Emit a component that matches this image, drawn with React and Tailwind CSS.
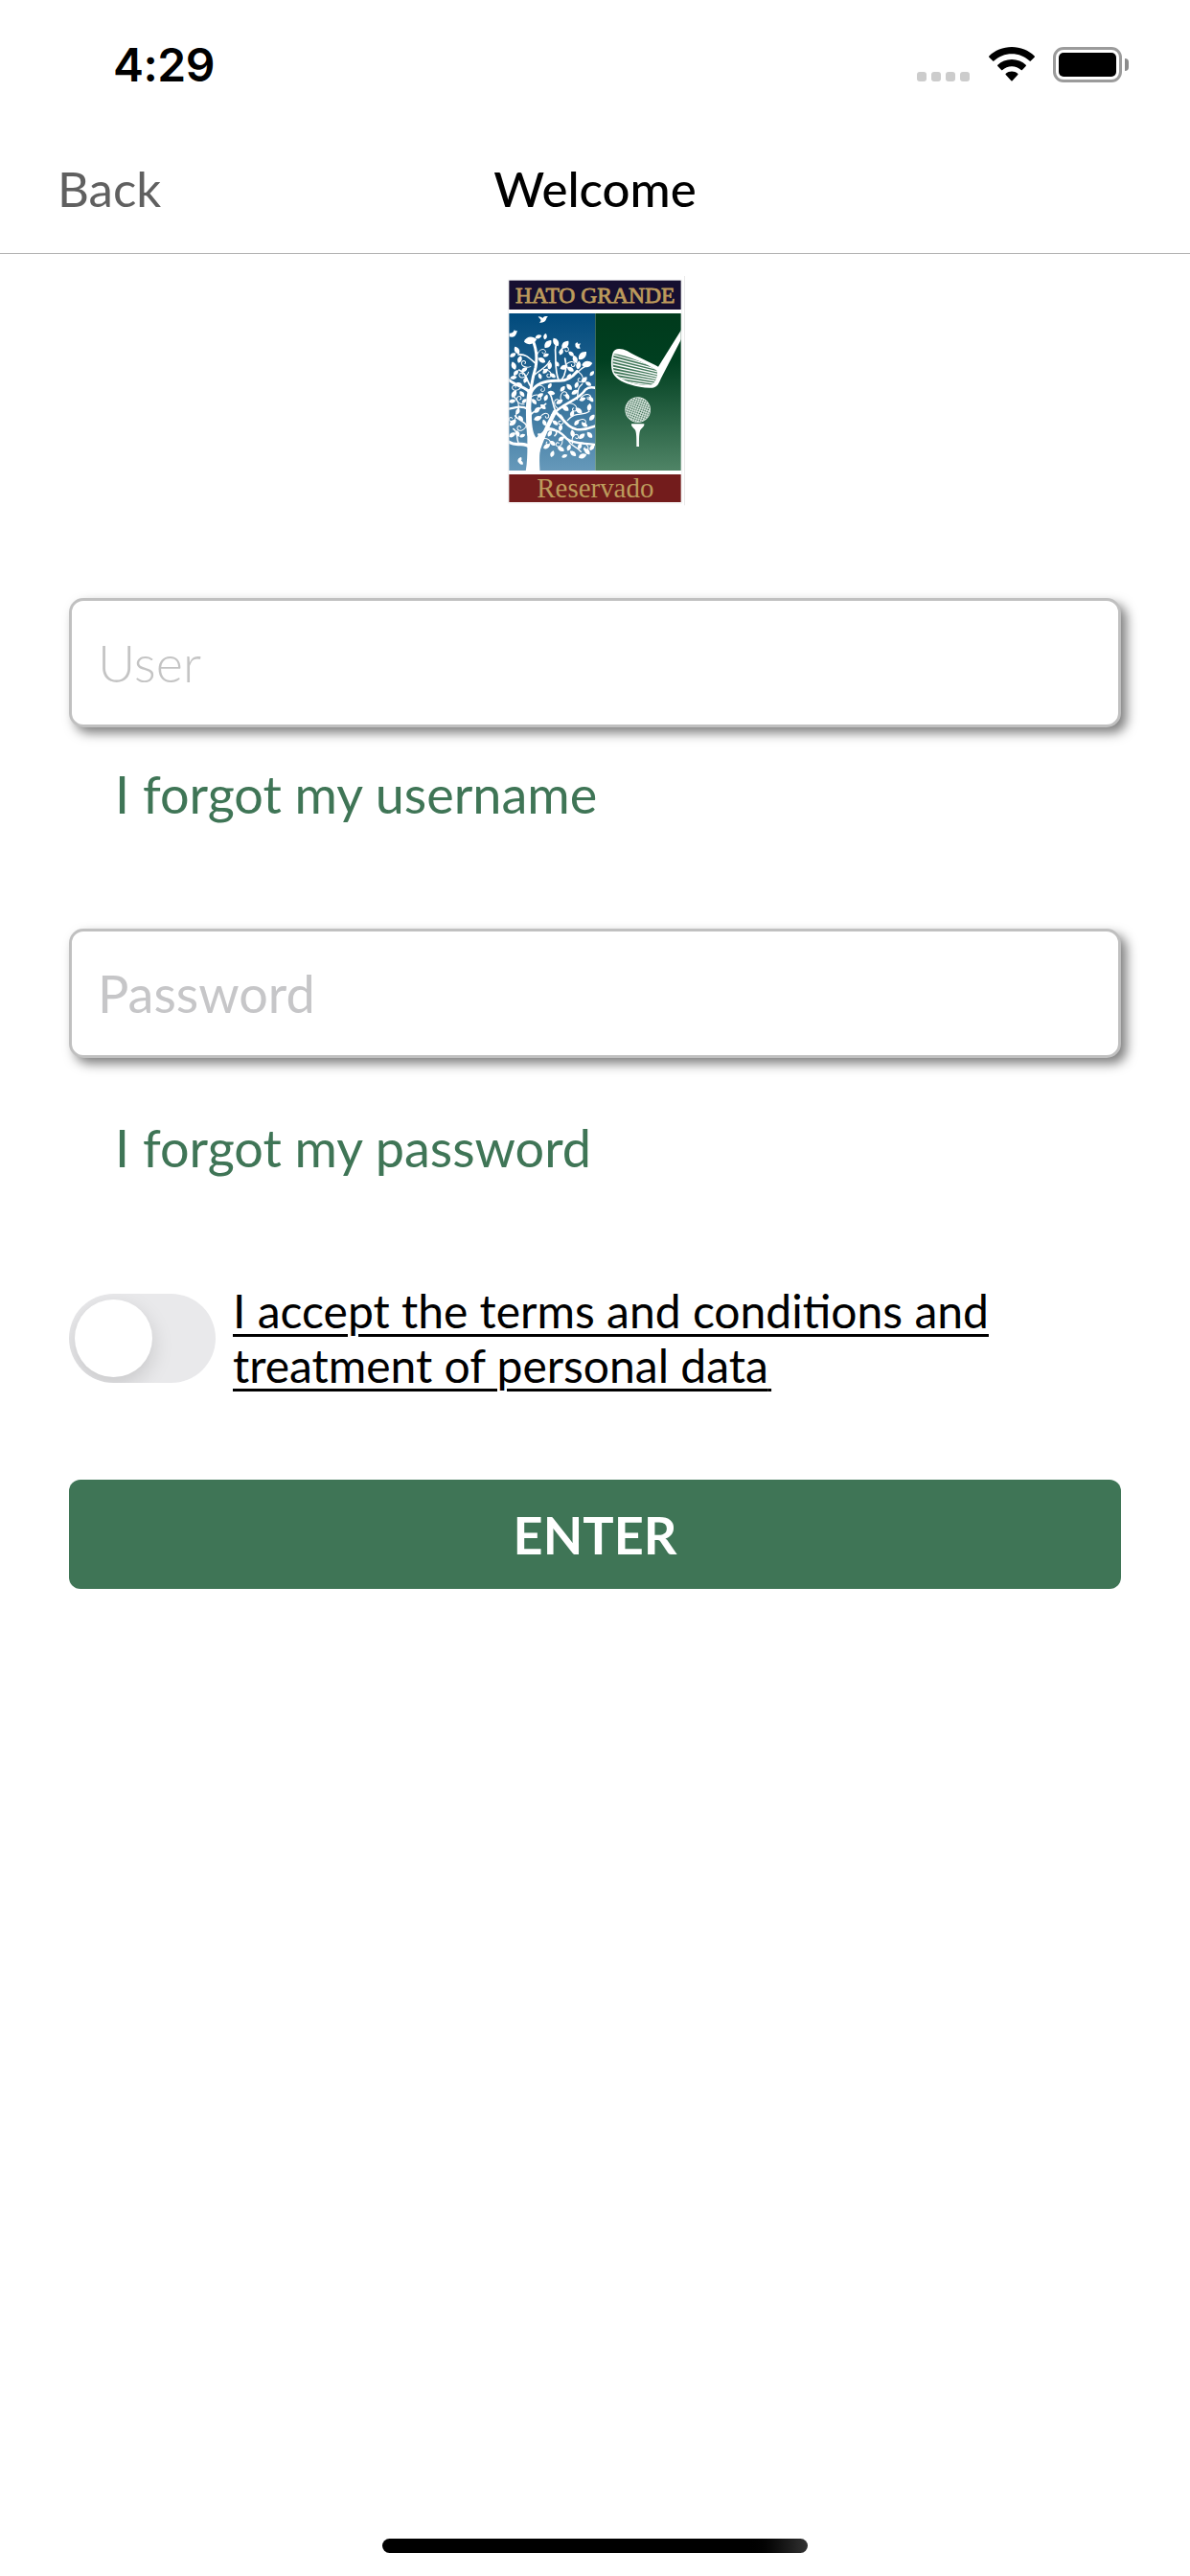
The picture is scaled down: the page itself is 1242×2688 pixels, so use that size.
import { useState } from "react";

// Main limbs of the tree: [path, stroke width]
const BRANCHES = [
  ["M98 640 C104 560 92 500 95 440 C98 390 104 350 116 310 C122 280 118 250 106 222", 9],
  ["M97 520 C92 460 92 420 99 385", 16],
  ["M118 590 C130 540 150 500 176 450", 13],
  ["M98 390 C88 372 60 372 33 350", 9],
  ["M92 440 C70 428 50 436 33 440", 7],
  ["M98 560 C80 540 56 560 33 544", 10],
  ["M104 385 C118 360 150 350 190 352 C215 352 232 340 246 322", 9],
  ["M188 350 C176 320 180 290 178 262 C176 246 184 238 180 224", 5],
  ["M196 352 C212 330 214 304 208 282", 5],
  ["M168 460 C200 420 250 416 272 380 C280 372 292 372 302 374", 8],
  ["M178 446 C168 424 170 404 158 388", 5],
  ["M176 448 C204 470 214 498 244 504 C270 508 286 500 302 494", 8],
  ["M150 506 C186 500 200 520 214 534 C240 552 270 546 300 552", 7],
  ["M152 500 C176 500 190 512 176 524", 5],
  ["M118 300 C98 282 84 266 62 270", 5],
  ["M112 334 C130 316 148 314 160 290", 4],
  ["M102 372 C84 346 90 330 64 318", 5],
  ["M96 464 C112 440 132 444 148 424", 5],
  ["M92 505 C88 478 66 480 52 462", 5],
  ["M216 476 C240 446 262 464 284 448", 4],
  ["M214 532 C226 560 246 556 258 574", 4],
  ["M236 334 C256 320 262 308 276 306", 4],
  ["M246 410 C250 390 244 376 262 362", 4],
  ["M62 440 C68 414 50 410 46 396", 4],
  ["M62 546 C54 524 62 512 46 502", 4],
];

// Curled twigs: [x, y, scale, rotation]
const CURLS = [
  [136, 262, 1, 0], [156, 330, 1, 80], [76, 334, 1, 190], [228, 300, 1, 20],
  [256, 344, 1, 110], [66, 412, 1, 260], [122, 404, 1, 40], [146, 462, 1, 10],
  [204, 396, 1, 330], [236, 436, 1, 80], [262, 480, 1, 20], [196, 478, 1, 120],
  [70, 500, 1, 190], [152, 542, 1, 60], [190, 548, 1, 150], [240, 530, 1, 330],
  [278, 402, 1, 30], [54, 374, 1, 200], [82, 300, 1, 240], [208, 254, 1, 10],
  [44, 470, 1, 160], [272, 560, 1, 80], [136, 376, 0.9, 70], [182, 420, 0.9, 300],
];

// Leaves: [x, y, rotation, scale]
const LEAVES = [
  [98, 226, 80, 1.7], [124, 214, 70, 0.9], [146, 214, 10, 0.8], [154, 238, 40, 1.3], [180, 232, -30, 1.2],
  [208, 240, 40, 1.3], [196, 262, 20, 0.9], [228, 268, -50, 0.9], [262, 274, 45, 1.4], [276, 300, 80, 1.4],
  [240, 286, -20, 1.1], [292, 330, 40, 0.8], [58, 258, -30, 1.1], [44, 272, 60, 0.9], [66, 286, 20, 1],
  [48, 306, -20, 1.1], [80, 318, 60, 0.9], [54, 328, 40, 0.9], [136, 288, -60, 1.1], [148, 272, 70, 0.8],
  [160, 306, 10, 1], [146, 322, 50, 0.9], [170, 336, -60, 0.9], [130, 338, -20, 0.8], [204, 310, 70, 1.1],
  [226, 316, -60, 1], [220, 340, 30, 0.9], [250, 304, 10, 1.1], [84, 350, 20, 0.9], [46, 342, 80, 0.9],
  [66, 364, -60, 0.9], [48, 394, 30, 1.1], [74, 394, -40, 0.9], [42, 416, 80, 0.9], [80, 416, 50, 0.8],
  [130, 398, 60, 0.9], [112, 418, -40, 0.9], [148, 406, 20, 0.9], [166, 390, -80, 1], [200, 378, 40, 0.9],
  [222, 372, -40, 1], [244, 366, 20, 0.9], [238, 388, 60, 1], [216, 402, -20, 0.9], [268, 350, 40, 1],
  [282, 362, -60, 0.9], [120, 444, 40, 1], [140, 434, -50, 0.9], [122, 470, 70, 1.1], [144, 484, -20, 0.9],
  [190, 418, 60, 1], [210, 438, -50, 1.1], [230, 456, 20, 0.9], [252, 446, -50, 1.1], [284, 436, 10, 1],
  [262, 410, 70, 0.9], [290, 410, -40, 0.9], [292, 468, 40, 1], [270, 490, -60, 0.9], [244, 484, 40, 0.9],
  [232, 518, -10, 1], [260, 526, 50, 1], [286, 522, -40, 1], [60, 448, 20, 0.9], [44, 484, 50, 1.1],
  [70, 470, -40, 0.9], [60, 518, -20, 0.9], [42, 522, 60, 1], [74, 524, 70, 0.8], [132, 524, -60, 0.9],
  [160, 518, 30, 0.9], [150, 558, 60, 1], [170, 548, -50, 0.9], [168, 582, 20, 0.9], [196, 534, 60, 0.9],
  [196, 566, -60, 1], [220, 562, 20, 0.9], [234, 580, -50, 1], [262, 588, 70, 1.1], [278, 574, -40, 1],
  [292, 562, 40, 0.9], [254, 558, 20, 0.9], [206, 588, 70, 0.8], [194, 500, 10, 0.9], [178, 484, -50, 0.9],
  [66, 600, 30, 0.8], [70, 608, -50, 0.8], [160, 368, 30, 0.8], [184, 300, -30, 0.8],
];

function Logo() {
  return (
    <svg viewBox="20 24 564 726" className="h-[242px] w-[188px]" role="img" aria-label="Hato Grande Reservado">
      <defs>
        <linearGradient id="sky" x1="0" y1="0" x2="0" y2="1">
          <stop offset="0" stopColor="#004a7c" />
          <stop offset="0.35" stopColor="#1f608d" />
          <stop offset="1" stopColor="#6699ba" />
        </linearGradient>
        <linearGradient id="turf" x1="0" y1="0" x2="0" y2="1">
          <stop offset="0" stopColor="#003a1c" />
          <stop offset="0.3" stopColor="#003f20" />
          <stop offset="1" stopColor="#4f8466" />
        </linearGradient>
        <pattern id="dimples" width="7" height="7" patternUnits="userSpaceOnUse" patternTransform="rotate(20)">
          <circle cx="3.5" cy="3.5" r="2.3" fill="#1f5a3b" />
        </pattern>
        <clipPath id="skyClip">
          <rect x="33" y="141" width="269" height="492" />
        </clipPath>
        <clipPath id="turfClip">
          <rect x="302" y="141" width="269" height="492" />
        </clipPath>
        <clipPath id="faceClip">
          <path d="M362 268 C400 272 470 300 497 322 C498 345 488 362 474 366 C430 366 384 352 362 326 C356 306 356 286 362 268Z" />
        </clipPath>
      </defs>
      <path d="M583 24V742" stroke="#e6e6e6" strokeWidth="3" />
      <path d="M30 37H574V735H30Z" fill="none" stroke="#ececec" strokeWidth="2" />

      <rect x="33" y="38" width="538" height="91" fill="#160f30" />
      <text x="53" y="108" textLength="499" lengthAdjust="spacingAndGlyphs" className="font-['Liberation_Serif',serif] text-[69px]" fill="#bd9b5c" stroke="#bd9b5c" strokeWidth="2.4">HATO GRANDE</text>

      <rect x="33" y="141" width="270" height="492" fill="url(#sky)" />
      <rect x="303" y="141" width="268" height="492" fill="url(#turf)" />

      <g clipPath="url(#skyClip)" fill="none" stroke="#fff" strokeLinecap="round">
        <path d="M84 640 C92 600 90 560 90 500 L104 440 C102 490 108 520 118 530 C128 520 140 510 150 500 C134 540 124 570 130 640Z" fill="#fff" stroke="none" />
        {BRANCHES.map(([d, w]) => (
          <path key={d} d={d} strokeWidth={w} />
        ))}
        {CURLS.map(([x, y, s, r]) => (
          <path key={`${x}-${y}`} strokeWidth="3" transform={`translate(${x} ${y}) rotate(${r}) scale(${s})`} d="M-16 12 C-12 -8 6 -14 11 -3 C13 6 2 9 1 1" />
        ))}
        <g fill="#fff" stroke="none">
          {LEAVES.map(([x, y, r, s]) => (
            <path key={`${x}-${y}`} transform={`translate(${x} ${y}) rotate(${r}) scale(${s})`} d="M0 -13 C9 -6 9 5 0 11 C-9 5 -9 -6 0 -13Z" />
          ))}
          <path d="M124 151 C130 150 134 153 138 156 C142 150 148 149 155 151 C150 154 150 158 148 162 C144 168 138 171 128 170 L132 165 C134 160 128 158 124 151Z" />
          <path d="M33 203 C40 204 46 202 50 192 L52 196 L59 196 C56 202 56 208 50 213 C44 217 38 215 33 214Z" />
          <path d="M240 236 l6 -5 l4 6 l7 -2 l-4 8 l3 8 l-9 0 l-6 -6Z" />
        </g>
      </g>

      <g clipPath="url(#turfClip)">
        <path fill="#fff" d="M576 186 L500 308 C480 296 430 276 402 258 C384 250 364 248 358 264 C350 290 352 312 358 328 C366 344 384 356 412 364 C436 372 464 376 482 374 C498 372 502 360 508 346 L576 214Z" />
        <path fill="#3f7658" d="M362 268 C400 272 470 300 497 322 C498 345 488 362 474 366 C430 366 384 352 362 326 C356 306 356 286 362 268Z" />
        <g clipPath="url(#faceClip)" stroke="#fff" strokeWidth="4">
          {[0, 1, 2, 3, 4, 5, 6, 7, 8].map((i) => (
            <path key={i} d={`M350 ${268 + i * 10} L502 ${310 + i * 7.5}`} />
          ))}
        </g>
        <circle cx="436" cy="443" r="40" fill="#e4ede8" />
        <circle cx="436" cy="443" r="38" fill="url(#dimples)" />
        <path fill="#fff" d="M416 487 H456 C457 496 450 498 444 506 C440 516 440 530 440 558 H432 C432 530 432 516 428 506 C422 498 415 496 416 487Z" />
      </g>

      <rect x="33" y="645" width="538" height="87" fill="#731c1c" />
      <text x="120" y="716" textLength="366" lengthAdjust="spacingAndGlyphs" className="font-['Liberation_Serif',serif] text-[89px]" fill="#bd9b5c">Reservado</text>
    </svg>
  );
}

function StatusBar() {
  return (
    <div className="flex h-[132px] items-start justify-between pr-[64px] pl-[118px]">
      <span className="mt-[38px] font-['Inter',sans-serif] text-[48px] leading-[60px] font-semibold tracking-[-0.5px]">4:29</span>
      <div className="mt-[49px] flex h-[37px] items-start">
        <div className="mt-[26px] flex gap-[5px]">
          {[0, 1, 2, 3].map((i) => (
            <span key={i} className="size-[10px] rounded-[3px] bg-[#cccccc]" />
          ))}
        </div>
        <svg viewBox="0 0 48 36" className="ml-[20px] h-[36px] w-[48px]">
          <path d="M24 0C33.200 0 41.500 3.500 47.700 9.500Q48.200 10.100 47.700 10.700L43.800 14.600Q43.200 15.200 42.600 14.600C37.700 9.900 31.100 7.300 24 7.300S10.300 9.900 5.400 14.600Q4.800 15.200 4.200 14.600L.3 10.700Q-.2 10.100 .3 9.500C6.500 3.500 14.800 0 24 0Z" />
          <path d="M24 13C29.700 13 34.900 15.200 38.700 18.800Q39.300 19.400 38.700 20L34.900 23.900Q34.300 24.400 33.700 23.900C31.100 21.600 27.700 20.200 24 20.200S16.900 21.600 14.300 23.900Q13.700 24.400 13.100 23.900L9.300 20Q8.700 19.400 9.300 18.800C13.100 15.200 18.300 13 24 13Z" />
          <path d="M24 25.500C26.300 25.500 28.500 26.300 30.200 27.700Q30.900 28.300 30.300 28.900L24.600 35.300Q24 35.900 23.400 35.300L17.700 28.900Q17.100 28.300 17.800 27.700C19.500 26.300 21.700 25.500 24 25.500Z" />
        </svg>
        <div className="ml-[19px] h-[37px] w-[72px] rounded-[11px] border-[3px] border-[#9b9b9b] p-[3px]">
          <div className="h-full w-full rounded-[5px] bg-black" />
        </div>
        <div className="mt-[12px] ml-[3px] h-[13px] w-[4px] rounded-r-full bg-[#8c8c8c]" />
      </div>
    </div>
  );
}

const fieldClass =
  "block h-[135px] w-full rounded-[15px] border-[3px] border-[#c0c0c0] bg-white px-[27px] text-[54px] shadow-[6px_6px_12px_rgba(0,0,0,0.5)] outline-none";

const linkClass = "block w-fit text-left text-[54px] leading-[64px] text-[#3f7556]";

export default function App() {
  const [accepted, setAccepted] = useState(false);
  return (
    <div className="flex h-[2688px] w-[1242px] flex-col bg-white font-['Lato',sans-serif] text-black">
      <StatusBar />
      <header className="grid h-[133px] grid-cols-3 items-center border-b border-[#b2b2b2] px-[60px] pb-[3px] text-[51px] leading-[60px]">
        <button className="text-left text-[#606060]">Back</button>
        <h1 className="text-center font-medium">Welcome</h1>
      </header>

      <main className="flex flex-1 flex-col px-[72px]">
        <div className="flex h-[359px] pt-[23px] pl-[455px]">
          <Logo />
        </div>
        <input className={`${fieldClass} font-light placeholder:text-[#c4c4c4]`} placeholder="User" />
        <button className={`${linkClass} mt-[38px] ml-[48px]`}>I forgot my username</button>
        <input type="password" className={`${fieldClass} mt-[108px] placeholder:text-[#c6c6c8]`} placeholder="Password" />
        <button className={`${linkClass} mt-[62px] ml-[48px]`}>I forgot my password</button>

        <div className="mt-[109px] flex items-start">
          <button
            role="switch"
            aria-checked={accepted}
            aria-label="Accept terms"
            onClick={() => setAccepted(!accepted)}
            className="mt-[11px] flex h-[93px] w-[153px] shrink-0 items-center overflow-hidden rounded-full bg-[#e9e9eb] px-[6px]"
          >
            <span className="size-[81px] rounded-full bg-white shadow-[0_8px_22px_rgba(0,0,0,0.15)]" />
          </button>
          <a className="ml-[18px] text-[48px] leading-[57px] whitespace-pre underline decoration-[3px] underline-offset-[6px]">
            {"I accept the terms and conditions and\ntreatment of personal data"}
            <span className="tracking-[-9px]"> </span>
          </a>
        </div>

        <button className="mt-[91px] h-[114px] rounded-[12px] bg-[#3f7556] text-[54px] font-bold text-white">ENTER</button>
      </main>

      <div className="mb-[24px] h-[15px] w-[444px] self-center rounded-full bg-linear-to-r from-black from-85% to-[#333333]" />
    </div>
  );
}
